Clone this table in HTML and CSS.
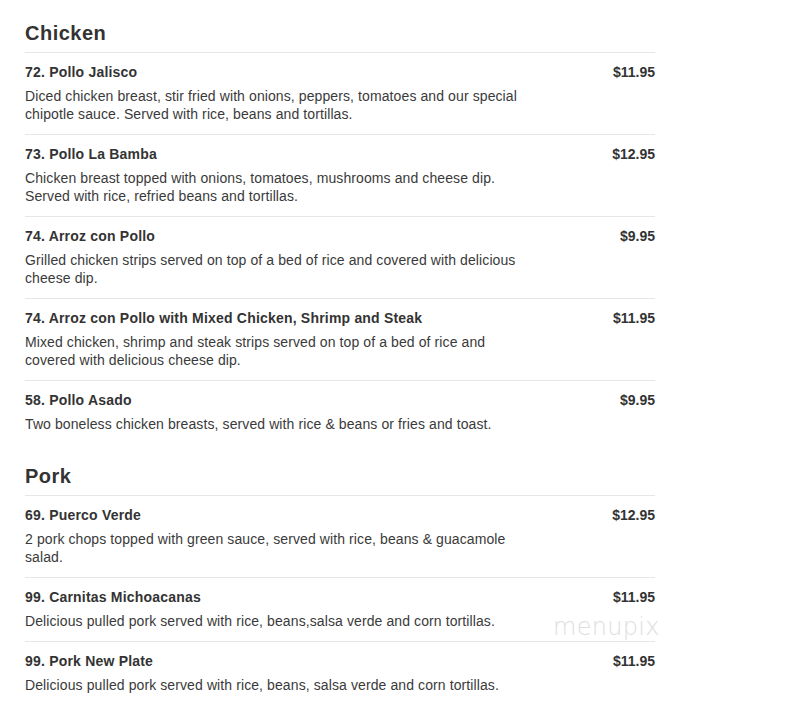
FILE: index.html
```html
<!DOCTYPE html>
<html>
<head>
<meta charset="utf-8">
<link rel="stylesheet" href="styles.css">
</head>
<body>
<div class="menu">
  <section class="section">
    <h2 class="section-title">Chicken</h2>
    <div class="item">
      <div class="item-head"><span class="name">72. Pollo Jalisco</span><span class="price">$11.95</span></div>
      <p class="desc">Diced chicken breast, stir fried with onions, peppers, tomatoes and our special chipotle sauce. Served with rice, beans and tortillas.</p>
    </div>
    <div class="item">
      <div class="item-head"><span class="name">73. Pollo La Bamba</span><span class="price">$12.95</span></div>
      <p class="desc">Chicken breast topped with onions, tomatoes, mushrooms and cheese dip. Served with rice, refried beans and tortillas.</p>
    </div>
    <div class="item">
      <div class="item-head"><span class="name">74. Arroz con Pollo</span><span class="price">$9.95</span></div>
      <p class="desc">Grilled chicken strips served on top of a bed of rice and covered with delicious cheese dip.</p>
    </div>
    <div class="item">
      <div class="item-head"><span class="name">74. Arroz con Pollo with Mixed Chicken, Shrimp and Steak</span><span class="price">$11.95</span></div>
      <p class="desc">Mixed chicken, shrimp and steak strips served on top of a bed of rice and covered with delicious cheese dip.</p>
    </div>
    <div class="item">
      <div class="item-head"><span class="name">58. Pollo Asado</span><span class="price">$9.95</span></div>
      <p class="desc">Two boneless chicken breasts, served with rice &amp; beans or fries and toast.</p>
    </div>
  </section>
  <section class="section">
    <h2 class="section-title">Pork</h2>
    <div class="item">
      <div class="item-head"><span class="name">69. Puerco Verde</span><span class="price">$12.95</span></div>
      <p class="desc">2 pork chops topped with green sauce, served with rice, beans &amp; guacamole salad.</p>
    </div>
    <div class="item">
      <div class="item-head"><span class="name">99. Carnitas Michoacanas</span><span class="price">$11.95</span></div>
      <p class="desc">Delicious pulled pork served with rice, beans,salsa verde and corn tortillas.</p>
    </div>
    <div class="item">
      <div class="item-head"><span class="name">99. Pork New Plate</span><span class="price">$11.95</span></div>
      <p class="desc">Delicious pulled pork served with rice, beans, salsa verde and corn tortillas.</p>
    </div>
  </section>
  <div class="watermark">menupix</div>
</div>
</body>
</html>
```
FILE: styles.css
```css
html, body {
  margin: 0;
  padding: 0;
  background: #fff;
}
body {
  font-family: "Liberation Sans", Arial, sans-serif;
  color: #333;
}
.menu {
  position: relative;
  width: 630px;
  padding: 21px 0 0 25px;
}
.section {
  margin-bottom: 20px;
}
.section-title {
  margin: 0;
  font-size: 20px;
  line-height: 24px;
  font-weight: bold;
  letter-spacing: 0.5px;
  color: #333;
  padding-bottom: 7px;
}
.item {
  border-top: 1px solid #e6e6e6;
  padding: 10px 0 11px;
}
.item-head {
  display: flex;
  justify-content: space-between;
  align-items: baseline;
  font-size: 14px;
  line-height: 18px;
  font-weight: bold;
  color: #333;
}
.name {
  letter-spacing: 0.2px;
}
.desc {
  margin: 6px 0 0;
  max-width: 505px;
  font-size: 14px;
  line-height: 18px;
  letter-spacing: 0.1px;
  color: #3a3a3a;
}
.watermark {
  position: absolute;
  left: 553px;
  top: 613px;
  font-family: "DejaVu Sans", sans-serif;
  font-size: 24px;
  font-weight: 200;
  letter-spacing: 0.3px;
  color: #dedede;
}
```
